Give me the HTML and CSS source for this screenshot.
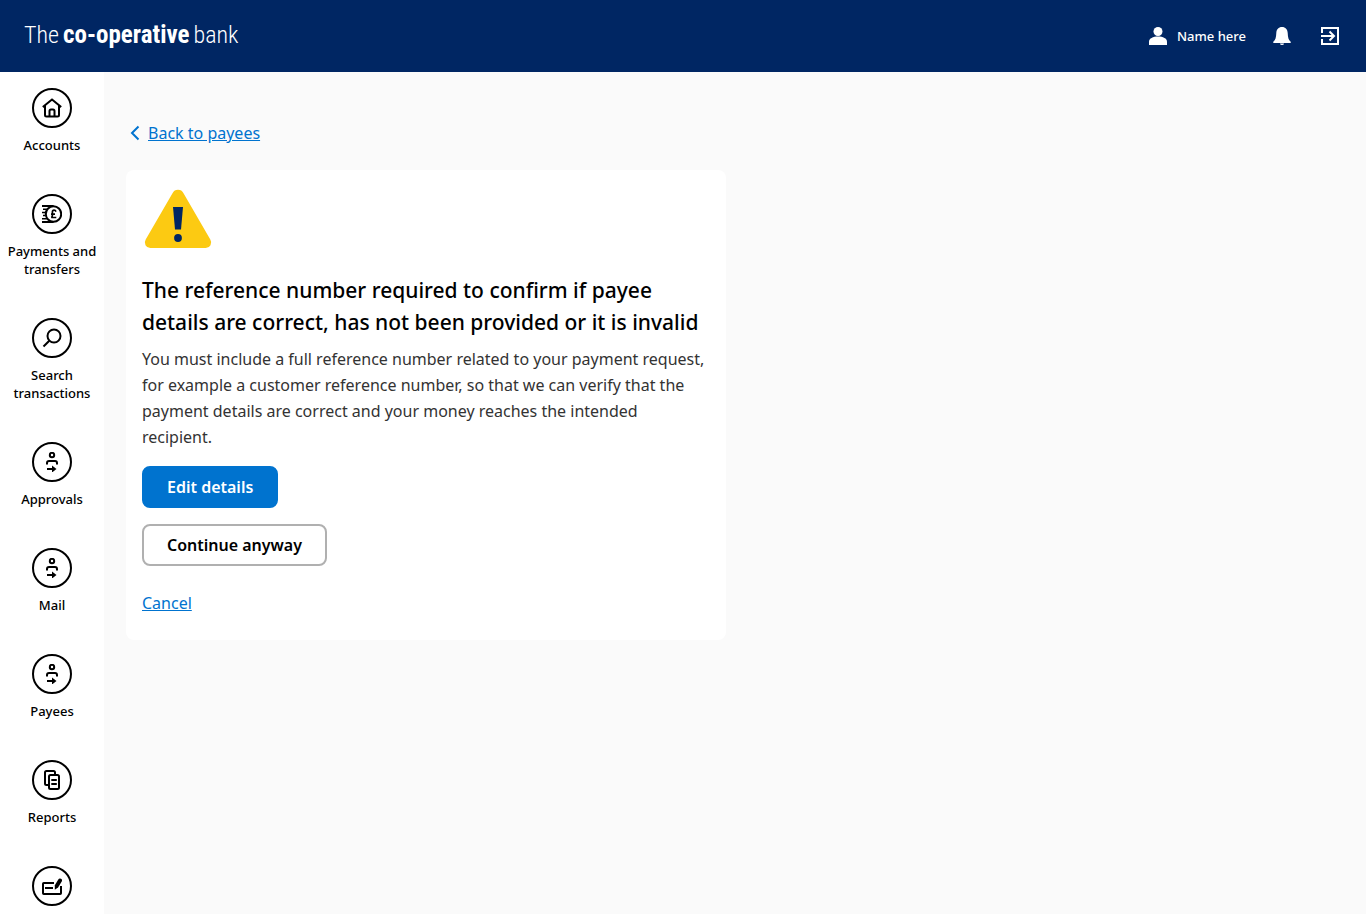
FILE: index.html
```html
<!DOCTYPE html>
<html lang="en">
  <head>
    <meta charset="utf-8">
    <meta name="viewport" content="width=device-width, initial-scale=1">
    <title>Confirm payee - The Co-operative Bank</title>
    <link rel="stylesheet" href="styles.css">
  </head>
  <body>
    <header class="header">
      <a href="#" class="logo"><span>The</span> <strong>co-operative</strong> <span>bank</span></a>
      <div class="header-actions">
        <a href="#" class="user">
          <svg width="18" height="18" viewBox="0 0 18 18"><circle cx="9" cy="4.5" r="4.5" fill="#fff"/><path d="M0 18v-3.5C0 11.500 4 9.500 9 9.500s9 2 9 5V18z" fill="#fff"/></svg>
          Name here
        </a>
        <button class="icon-button" aria-label="Notifications">
          <svg width="18" height="18" viewBox="0 0 18 18"><path d="M9 0C5.500 0 3.500 2.500 3.300 6 3.100 10.500 2.500 13 .3 14.800V16h17.400v-1.200C15.500 13 14.900 10.500 14.700 6 14.500 2.500 12.500 0 9 0zM7 16.500a2 1.500 0 0 0 4 0z" fill="#fff"/></svg>
        </button>
        <button class="icon-button" aria-label="Log out">
          <svg width="18" height="18" viewBox="0 0 18 18" fill="none" stroke="#fff" stroke-width="2"><path d="M1 6V1h16v16H1v-5M0 9h13M8.500 4.500L13 9l-4.500 4.500"/></svg>
        </button>
      </div>
    </header>

    <div class="layout">
      <nav class="sidebar">
        <a href="#" class="nav-item">
          <span class="nav-icon">
            <svg width="20" height="20" viewBox="0 0 20 20"><path d="M.8 9L10 1.500 19.200 9M3 7.500V17q0 1.500 1.500 1.500H15.500Q17 18.500 17 17V7.500M7.500 18.500V13q0-1.500 1.500-1.500h2q1.500 0 1.500 1.500v5.500"/></svg>
          </span>
          Accounts
        </a>
        <a href="#" class="nav-item">
          <span class="nav-icon">
            <svg width="20" height="20" viewBox="0 0 20 20"><circle cx="11.500" cy="10" r="7.700"/><path d="M0 2h11.500M0 18h11.500"/><path d="M1 5.200h4.500M0 8.400h3.500M1 11.600h2.500M0 14.800h5.500" stroke-width="1.500"/><path d="M14 7.600q-.6-1.400-1.900-1.400-1.700 0-1.700 1.900v3.200q0 1.600-1.100 2.200h5M9 10.200h4" stroke-width="1.700"/></svg>
          </span>
          Payments and transfers
        </a>
        <a href="#" class="nav-item">
          <span class="nav-icon">
            <svg width="20" height="20" viewBox="0 0 20 20"><circle cx="12" cy="8" r="6.500"/><path d="M7.300 12.700L1.500 18.500"/></svg>
          </span>
          Search transactions
        </a>
        <a href="#" class="nav-item">
          <span class="nav-icon">
            <svg width="20" height="20" viewBox="0 0 20 20"><circle cx="10" cy="3" r="2.200"/><path d="M5 12.500V11q0-2 2-2h6q2 0 2 2v1.500M5 17h6"/><path d="M10 13.500l4.500 3.500L10 20.500z" fill="#000" stroke="none"/></svg>
          </span>
          Approvals
        </a>
        <a href="#" class="nav-item">
          <span class="nav-icon">
            <svg width="20" height="20" viewBox="0 0 20 20"><circle cx="10" cy="3" r="2.200"/><path d="M5 12.500V11q0-2 2-2h6q2 0 2 2v1.500M5 17h6"/><path d="M10 13.500l4.500 3.500L10 20.500z" fill="#000" stroke="none"/></svg>
          </span>
          Mail
        </a>
        <a href="#" class="nav-item">
          <span class="nav-icon">
            <svg width="20" height="20" viewBox="0 0 20 20"><circle cx="10" cy="3" r="2.200"/><path d="M5 12.500V11q0-2 2-2h6q2 0 2 2v1.500M5 17h6"/><path d="M10 13.500l4.500 3.500L10 20.500z" fill="#000" stroke="none"/></svg>
          </span>
          Payees
        </a>
        <a href="#" class="nav-item">
          <span class="nav-icon">
            <svg width="20" height="20" viewBox="0 0 20 20"><rect x="7" y="5" width="10" height="14" rx="1.500"/><path d="M7 15H4.500Q3 15 3 13.500v-11Q3 1 4.500 1h7Q13 1 13 2.500V5M9.300 10h5.500M9.300 14h5.500"/></svg>
          </span>
          Reports
        </a>
        <a href="#" class="nav-item" aria-label="Cheques">
          <span class="nav-icon">
            <svg width="20" height="20" viewBox="0 0 20 20"><path d="M12 7H1.800Q1 7 1 7.800V17.200Q1 18 1.800 18H18.200Q19 18 19 17.200V10M3 12h8"/><path d="M15 9.500L18 4.500" stroke-width="4" stroke-linecap="round"/><path d="M12.800 9l3.600 2.300-3.600 2.400z" fill="#000" stroke="none"/></svg>
          </span>
        </a>
      </nav>

      <main class="content">
        <a href="#" class="back-link">
          <svg width="10" height="16" viewBox="0 0 10 16" fill="none" stroke="#0073cf" stroke-width="2"><path d="M8.500 1.500L2 8l6.500 6.500"/></svg>
          <span>Back to payees</span>
        </a>
        <section class="card">
          <svg width="72" height="72" viewBox="0 0 72 72">
            <path d="M30.500 7.200a6.200 6.200 0 0 1 11 0L68.300 53.500a5.500 5.500 0 0 1-4.700 8.500H8.400a5.500 5.500 0 0 1-4.700-8.500z" fill="#fcca12"/>
            <path d="M31 21h10l-2 22.500h-6z" fill="#002663"/>
            <circle cx="36" cy="52" r="3.900" fill="#002663"/>
          </svg>
          <h1>The reference number required to confirm if payee details are correct, has not been provided or it is invalid</h1>
          <p>You must include a full reference number related to your payment request, for example a customer reference number, so that we can verify that the payment details are correct and your money reaches the intended recipient.</p>
          <button class="button primary">Edit details</button>
          <button class="button secondary">Continue anyway</button>
          <a href="#" class="cancel-link">Cancel</a>
        </section>
      </main>
    </div>
  </body>
</html>
```
FILE: styles.css
```css
* {
  box-sizing: border-box;
}

body {
  margin: 0;
  height: 100vh;
  display: flex;
  flex-direction: column;
  overflow: hidden;
  background: #fafafa;
  color: #000;
  font-family: "Noto Sans", sans-serif;
  font-size: 16px;
}

svg {
  display: block;
  flex: none;
}

.header {
  flex: none;
  height: 72px;
  padding: 0 24px;
  display: flex;
  align-items: center;
  justify-content: space-between;
  background: #002663;
  color: #fff;
}

.logo {
  display: flex;
  align-items: baseline;
  gap: 4px;
  padding-bottom: 2px;
  color: #fff;
  text-decoration: none;
  font-family: "Roboto Condensed", "Liberation Sans Narrow", Roboto, sans-serif;
  font-size: 24px;
  font-weight: 300;
  line-height: 32px;
}

.logo strong {
  font-size: 25px;
  font-weight: 700;
}

.header-actions {
  display: flex;
  align-items: center;
  gap: 24px;
}

.user {
  display: flex;
  align-items: center;
  gap: 10px;
  color: #fff;
  text-decoration: none;
  font-size: 13px;
  font-weight: 550;
}

.icon-button {
  width: 24px;
  height: 24px;
  padding: 3px;
  border: 0;
  background: none;
  cursor: pointer;
}

.layout {
  flex: 1;
  min-height: 0;
  display: flex;
}

.sidebar {
  flex: none;
  width: 104px;
  padding: 16px 4px 0;
  display: flex;
  flex-direction: column;
  gap: 40px;
  overflow: hidden;
  background: #fff;
}

.nav-item {
  flex: none;
  display: flex;
  flex-direction: column;
  align-items: center;
  gap: 8px;
  color: #000;
  text-align: center;
  text-decoration: none;
  font-size: 13px;
  font-weight: 550;
  line-height: 18px;
}

.nav-icon {
  width: 40px;
  height: 40px;
  display: flex;
  align-items: center;
  justify-content: center;
  border: 2px solid #000;
  border-radius: 50%;
}

.nav-icon svg {
  fill: none;
  stroke: #000;
  stroke-width: 2;
}

.content {
  flex: 1;
  padding: 48px 22px;
}

.back-link {
  width: fit-content;
  padding-left: 4px;
  display: flex;
  align-items: center;
  gap: 8px;
  line-height: 26px;
  color: #0073cf;
  text-decoration: none;
}

.back-link span {
  text-decoration: underline;
}

.card {
  max-width: 600px;
  margin-top: 24px;
  padding: 16px 16px 24px;
  display: flex;
  flex-direction: column;
  align-items: flex-start;
  border-radius: 8px;
  background: #fff;
}

.card h1 {
  margin: 16px 0 8px;
  font-size: 21px;
  font-weight: 550;
  line-height: 32px;
}

.card p {
  margin: 0 0 16px;
  line-height: 26px;
  color: #333;
}

.button {
  height: 42px;
  margin-bottom: 16px;
  padding: 0 23px;
  border: 2px solid #0073cf;
  border-radius: 8px;
  font-family: inherit;
  font-size: 16px;
  font-weight: 600;
  cursor: pointer;
}

.primary {
  background: #0073cf;
  color: #fff;
}

.secondary {
  margin-bottom: 24px;
  border-color: #b0b0b0;
  background: #fff;
  color: #000;
}

.cancel-link {
  line-height: 26px;
  color: #0073cf;
}
```
